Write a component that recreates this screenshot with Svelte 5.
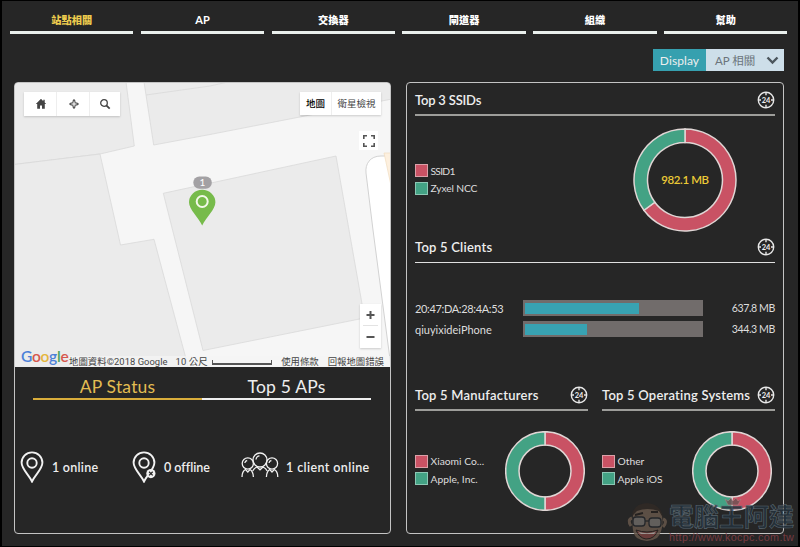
<script lang="ts">
	const tabs = ['站點相關', 'AP', '交換器', '閘道器', '組織', '幫助'];

	const red = '#c95264';
	const green = '#43a284';

	const clients = [
		{ name: '20:47:DA:28:4A:53', usage: '637.8 MB', percent: 65 },
		{ name: 'qiuyixideiPhone', usage: '344.3 MB', percent: 35.5 }
	];

	const halves = [
		{
			title: 'Top 5 Manufacturers',
			legend: ['Xiaomi Co...', 'Apple, Inc.']
		},
		{
			title: 'Top 5 Operating Systems',
			legend: ['Other', 'Apple iOS']
		}
	];

	// ring segment between two fractions of a full turn, clockwise from 12 o'clock
	function arc(c: number, outer: number, inner: number, from: number, to: number) {
		const point = (r: number, t: number) => {
			const a = t * Math.PI * 2;
			return `${(c + r * Math.sin(a)).toFixed(2)} ${(c - r * Math.cos(a)).toFixed(2)}`;
		};
		const large = to - from > 0.5 ? 1 : 0;
		return `M${point(outer, from)}A${outer} ${outer} 0 ${large} 1 ${point(outer, to)}L${point(inner, to)}A${inner} ${inner} 0 ${large} 0 ${point(inner, from)}Z`;
	}
</script>

{#snippet clock()}
	<svg class="clock" width="18" height="18" viewBox="0 0 18 18">
		<circle cx="9" cy="9" r="7.7" />
		<path d="M9 1v3.2M9 13.8V17M1 9h3M14 9H17" />
		<text x="9" y="11.5" text-anchor="middle">24</text>
	</svg>
{/snippet}

{#snippet donut(size: number, outer: number, inner: number, split: number)}
	<svg class="donut" width={size} height={size} viewBox="0 0 {size} {size}">
		<path d={arc(size / 2, outer, inner, 0, split)} fill={red} />
		<path d={arc(size / 2, outer, inner, split, 1)} fill={green} />
	</svg>
{/snippet}

{#snippet legend(items: string[])}
	<ul class="legend">
		{#each items as item, i}
			<li><i class:second={i === 1}></i><span>{item}</span></li>
		{/each}
	</ul>
{/snippet}

<div class="page">
	<nav>
		{#each tabs as tab, i}
			<div class="tab" class:active={i === 0} class:latin={tab === 'AP'}>{tab}</div>
		{/each}
	</nav>

	<div class="toolbar">
		<span class="label">Display</span>
		<div class="select">
			<span>AP 相關</span>
			<svg width="13" height="9" viewBox="0 0 13 9">
				<path d="M1.5 1.5l5 5 5-5" fill="none" stroke="#4b555c" stroke-width="2.4" />
			</svg>
		</div>
	</div>

	<main>
		<section class="panel left">
			<div class="map">
				<svg class="tiles" width="375" height="284" viewBox="15 83 375 284">
					<g fill="#ebebeb" stroke="#d9d9d9" stroke-width="0.8">
						<path d="M14 82H126L134.3 146 100 154 14 164.5Z" />
						<path d="M14 164.5L100 154 120.5 245 154 239.3 185 355 188.5 368H14Z" />
						<path d="M144 82L153.7 145 210 134.5 310 115 392 99V82Z" />
						<path d="M146 95L210 86 228 82" fill="none" />
						<path d="M163.3 193.3L336 156 364.5 318 203 350.5Z" />
					</g>
					<path
						d="M392 156H381C370 156 365 164 366 173L373 230 391 367H392Z"
						fill="#fff"
						stroke="#d2d2d2"
					/>
					<path d="M384 153H392V190Z" fill="#fdf0df" stroke="#f1dcc0" stroke-width="0.7" />
					<rect x="193.3" y="176.5" width="18.5" height="12.3" rx="6" fill="#a3a1a4" />
					<text class="count" x="202.3" y="186.3" text-anchor="middle">1</text>
					<path
						d="M202.2 225.5C198.5 217.5 189 209.5 189 202.3A13.2 12.6 0 0 1 215.4 202.3C215.4 209.500 206 217.500 202.2 225.5Z"
						fill="#77bb4b"
					/>
					<circle cx="202.2" cy="201.5" r="5.5" fill="none" stroke="#f3f8e9" stroke-width="2" />
				</svg>

				<div class="tools">
					<span>
						<svg width="12" height="12" viewBox="0 0 12 12">
							<path d="M6 .8L.8 6H2.2V10.7H5V7.500H7V10.7H9.8V6H11.2L9.7 4.5V1.700H8.3V3.2Z" fill="#444" />
						</svg>
					</span>
					<span>
						<svg width="12" height="12" viewBox="0 0 12 12">
							<path d="M6 .8L8.2 3.800 11.2 6 8.2 8.200 6 11.2 3.8 8.200 .8 6 3.8 3.800Z" fill="#555" />
							<path d="M6 3.500V8.500M3.500 6H8.500" stroke="#fff" stroke-width="1.100" />
							<path d="M2.800 2.800L4.300 4.300M9.200 2.800L7.700 4.300M2.800 9.200L4.300 7.700M9.200 9.200L7.700 7.700" stroke="#fff" stroke-width="1.400" />
						</svg>
					</span>
					<span>
						<svg width="12" height="12" viewBox="0 0 12 12">
							<circle cx="5" cy="5" r="3.3" fill="none" stroke="#444" stroke-width="1.3" />
							<path d="M7.3 7.3L10.7 10.7" stroke="#444" stroke-width="1.8" />
						</svg>
					</span>
				</div>

				<div class="types">
					<span class="current">地圖</span>
					<span>衛星檢視</span>
				</div>

				<div class="fullscreen">
					<svg width="12" height="12" viewBox="0 0 12 12">
						<path d="M.8 4V.8H4M8 .8H11.2V4M11.2 8V11.2H8M4 11.2H.8V8" fill="none" stroke="#555" stroke-width="1.6" />
					</svg>
				</div>

				<div class="zoom">
					<svg width="21" height="44" viewBox="0 0 21 44">
						<path d="M6.500 11H14.500M10.500 7V15M6.500 33H14.500" stroke="#555" stroke-width="2" />
						<path d="M3 21.500H18" stroke="#e3e3e3" />
					</svg>
				</div>

				<div class="google">
					<b>G</b><b>o</b><b>o</b><b>g</b><b>l</b><b>e</b>
				</div>
				<div class="credits">
					<span class="data">地圖資料©2018 Google</span>
					<span class="scale">10 公尺</span>
					<i></i>
					<span class="terms">使用條款</span>
					<span class="report">回報地圖錯誤</span>
				</div>
			</div>

			<div class="switch">
				<span class="active">AP Status</span>
				<span>Top 5 APs</span>
			</div>

			<div class="status">
				<div class="stat online">
					<svg width="24" height="32" viewBox="0 0 24 32">
						<path d="M12 30.500C9 24 1.6 18 1.6 11.8A10.4 10.400 0 0 1 22.4 11.8C22.4 18 15 24 12 30.500Z" />
						<circle cx="12" cy="12" r="4.7" />
					</svg>
					<span>1 online</span>
				</div>
				<div class="stat offline">
					<svg width="24" height="32" viewBox="0 0 24 32">
						<path d="M12 30.500C9 24 1.6 18 1.6 11.8A10.4 10.400 0 0 1 22.4 11.8C22.4 18 15 24 12 30.500Z" />
						<circle cx="12" cy="12" r="4.7" />
						<circle cx="18.9" cy="22.6" r="4.6" fill="#f2f2f2" stroke="none" />
						<path d="M17.100 20.800L20.700 24.400M20.700 20.800L17.100 24.400" class="cross" />
					</svg>
					<span>0 offline</span>
				</div>
				<div class="stat people">
					<svg width="38" height="28" viewBox="0 0 38 28">
						<circle cx="19" cy="9" r="7" />
						<circle cx="6.8" cy="12.5" r="5.6" />
						<circle cx="31" cy="12.5" r="5.6" />
						<path d="M15 8.5Q15.5 5 18.5 4.8M3.8 12Q4.2 9.8 6.2 9.5M28 12Q28.4 9.8 30.4 9.5" />
						<path d="M1 26Q1 20.5 4.5 18.500L6.8 21 9 18.500Q12.2 20.5 12.4 26M25.4 26Q25.6 20.5 28.8 18.500L31 21 33.3 18.500Q36.8 20.5 36.8 26" />
						<path d="M11.7 20Q13 17.3 16 16L19 18.800 22 16Q25 17.3 26.2 20" />
					</svg>
					<span>1 client online</span>
				</div>
			</div>
		</section>

		<section class="panel right">
			<header>
				<h3 class="ssids">Top 3 SSIDs</h3>
				{@render clock()}
			</header>
			<div class="usage">
				{@render legend(['SSID1', 'Zyxel NCC'])}
				<div class="ring">
					{@render donut(104, 51, 37.5, 0.649)}
					<span>982.1 MB</span>
				</div>
			</div>

			<header class="thin">
				<h3>Top 5 Clients</h3>
				{@render clock()}
			</header>
			<div class="clients">
				{#each clients as client}
					<div class="client">
						<span class="name">{client.name}</span>
						<div class="bar"><div class="fill" style="width: {client.percent}%"></div></div>
						<span class="amount">{client.usage}</span>
					</div>
				{/each}
			</div>

			<div class="halves">
				{#each halves as half}
					<div class="half">
						<header>
							<h3>{half.title}</h3>
							{@render clock()}
						</header>
						<div class="share">
							{@render legend(half.legend)}
							{@render donut(80, 39.3, 26, 0.5)}
						</div>
					</div>
				{/each}
			</div>
		</section>
	</main>

	<div class="watermark">
		<svg width="42" height="46" viewBox="0 0 42 46">
			<path d="M6 14Q4 33 10 37 20 43 30 37 37 30 35 14 31 5 20 5 9 6 6 14Z" fill="#66574b" />
			<path d="M5 15Q6 3 20 2 34 3 36 17L32 10Q20 6 10 10Z" fill="#312a25" />
			<path d="M5 17Q0 19 4 25M36 18Q41 20 36 26" fill="none" stroke="#66574b" stroke-width="3" />
			<path d="M8 14L16 12M24 11L31 11" stroke="#25211f" stroke-width="2" />
			<g fill="#6d6966" stroke="#24272b" stroke-width="1.3">
				<rect x="6" y="16" width="12" height="9" rx="3" />
				<rect x="22" y="17" width="12" height="9" rx="3" />
				<path d="M18 20H22" />
			</g>
			<path d="M9 29Q20 33 31 29 28 38 19 38 12 37 9 29Z" fill="#75413e" stroke="#25211f" />
			<path d="M11 30.500Q20 34 29 30.500L27 33H14Z" fill="#97918b" />
		</svg>
		<svg class="crown" width="18" height="9" viewBox="0 0 18 9">
			<path d="M1 2L4 4 7 1 9 4 12 1 14 4 17 2 14 8H4Z" fill="#705154" stroke="#b78388" stroke-width="0.6" />
		</svg>
		<div>
			<strong>電腦王阿達</strong>
			<small>http://www.kocpc.com.tw</small>
		</div>
	</div>
</div>

<style>
	:global(body) {
		margin: 0;
		background: #000;
	}

	.page {
		box-sizing: border-box;
		position: relative;
		width: 800px;
		height: 547px;
		overflow: hidden;
		border: solid #000;
		border-width: 1px 2px 1px 2px;
		background: #262626;
		color: #eee;
		font-family: Lato, 'Noto Sans CJK TC', sans-serif;
		font-size: 11px;
		font-variant-ligatures: none;
		white-space: nowrap;
	}

	nav {
		display: grid;
		grid-template-columns: repeat(6, 1fr);
		gap: 7.4px;
		padding: 8px 10.5px 0 8px;
	}

	.tab {
		height: 22px;
		border-bottom: 3px solid #e9efec;
		text-align: center;
		line-height: 22px;
		font-size: 10.2px;
		font-weight: 900;
		color: #fff;
	}

	.tab.latin {
		font-size: 11px;
		font-weight: 700;
	}

	.tab.active {
		color: #eccb4e;
	}

	.toolbar {
		display: flex;
		justify-content: flex-end;
		height: 22px;
		padding: 15px 14.5px 0 0;
		line-height: 23px;
	}

	.label {
		width: 53px;
		height: 22px;
		background: #36a0af;
		text-align: center;
		font-size: 12px;
		letter-spacing: 0.1px;
	}

	.select {
		box-sizing: border-box;
		display: flex;
		align-items: center;
		justify-content: space-between;
		width: 77.5px;
		height: 22px;
		padding: 0 5px 0 9px;
		background: #cddee9;
		color: #6b747b;
		font-size: 11.5px;
	}

	main {
		display: flex;
		gap: 15px;
		padding: 11px 14px 0 12px;
	}

	.panel {
		box-sizing: border-box;
		height: 452px;
		border: 1px solid #c4c4c4;
		border-radius: 4px;
	}

	.left {
		width: 377px;
		overflow: hidden;
	}

	.map {
		position: relative;
		height: 284px;
		overflow: hidden;
		background: #f6f6f6;
		color: #444;
	}

	.tiles {
		display: block;
	}

	.count {
		fill: #fff;
		font-size: 10px;
	}

	.tools,
	.types,
	.fullscreen,
	.zoom {
		position: absolute;
		display: flex;
		align-items: center;
		background: #fff;
		box-shadow: 0 1px 2px rgba(0, 0, 0, 0.18);
	}

	.tools {
		top: 9px;
		left: 9px;
		align-items: stretch;
		width: 96px;
		height: 24px;
	}

	.tools span {
		display: flex;
		flex: 1;
		align-items: center;
		justify-content: center;
		border-right: 1px solid #eee;
		padding-left: 2px;
	}

	.tools span:last-child {
		border: 0;
		padding: 0;
	}

	.types {
		top: 9px;
		left: 285px;
		width: 81px;
		height: 23px;
		font-size: 9.5px;
	}

	.types span {
		flex: 1;
		text-align: center;
		line-height: 23px;
	}

	.types .current {
		flex: 0 0 31px;
		border-right: 1px solid #eee;
		color: #000;
		font-weight: 500;
	}

	.fullscreen {
		top: 48px;
		left: 344px;
		width: 19px;
		height: 19px;
		justify-content: center;
		box-shadow: none;
	}

	.zoom {
		top: 221px;
		left: 345px;
		width: 21px;
		height: 44px;
	}

	.google {
		position: absolute;
		bottom: 1px;
		left: 6px;
		display: flex;
		font-size: 15.5px;
		letter-spacing: -0.3px;
		line-height: 20px;
	}

	.google b {
		font-weight: 600;
		color: #4c80d8;
	}

	.google b:nth-child(2),
	.google b:nth-child(6) {
		color: #d6574d;
	}

	.google b:nth-child(3) {
		color: #e5b63c;
	}

	.google b:nth-child(5) {
		color: #4da35e;
	}

	.credits {
		position: absolute;
		right: 0;
		bottom: 0;
		display: flex;
		box-sizing: border-box;
		width: 321px;
		height: 11px;
		padding-right: 6px;
		background: rgba(245, 245, 245, 0.7);
		font-family: Roboto, 'Noto Sans CJK TC', sans-serif;
		font-size: 9.4px;
		line-height: 11px;
	}

	.data {
		letter-spacing: 0.04px;
	}

	.scale {
		margin-left: 8px;
		letter-spacing: 0.1px;
	}

	.credits i {
		width: 58px;
		height: 3px;
		margin: 4px 0 0 4px;
		border: solid #555;
		border-width: 0 1px 2px;
	}

	.terms {
		margin-left: auto;
	}

	.report {
		margin-left: 9px;
	}

	.switch {
		display: flex;
		margin: 3px 19px 0 18px;
	}

	.switch span {
		flex: 1;
		height: 28px;
		border-bottom: 2px solid #eee;
		text-align: center;
		line-height: 34px;
		font-size: 17.5px;
		font-weight: 400;
		letter-spacing: 0.2px;
	}

	.switch .active {
		border-color: #d9ad3b;
		color: #e3bd52;
	}

	.status {
		display: flex;
		height: 134px;
		align-items: center;
		padding-left: 5px;
	}

	.stat {
		display: flex;
		align-items: center;
		gap: 8px;
		font-size: 12.5px;
		font-weight: 600;
		letter-spacing: 0.25px;
	}

	.stat.online {
		width: 112px;
	}

	.stat.offline {
		width: 109px;
		letter-spacing: 0;
	}

	.stat.people {
		gap: 7px;
		letter-spacing: 0.4px;
	}

	.stat svg {
		flex: none;
		fill: none;
		stroke: #f2f2f2;
		stroke-width: 1.9;
	}

	.stat.people svg {
		margin-top: -4px;
		stroke-width: 1.3;
	}

	.stat .cross {
		stroke: #262626;
		stroke-width: 1.3;
	}

	.right {
		width: 378px;
		padding: 0 8px;
	}

	header {
		box-sizing: border-box;
		display: flex;
		align-items: center;
		justify-content: space-between;
		height: 33px;
		border-bottom: 2px solid #9d9d9a;
	}

	header.thin {
		height: 32px;
		border-bottom: 1px solid #e0e0e0;
	}

	h3 {
		margin: 3px 0 0;
		font-size: 13px;
		font-weight: 600;
		line-height: 18px;
		letter-spacing: 0.22px;
	}

	h3.ssids {
		letter-spacing: -0.2px;
	}

	.thin h3 {
		margin-top: 1px;
	}

	.clock {
		margin-top: 2px;
		flex: none;
		fill: none;
		stroke: #e8e8e8;
		stroke-width: 1.4;
	}

	.thin .clock {
		margin-top: 1px;
	}

	.clock text {
		fill: #eee;
		stroke: none;
		font-size: 7.5px;
		font-weight: 700;
	}

	.usage,
	.share {
		box-sizing: border-box;
		display: flex;
		align-items: center;
		justify-content: space-between;
	}

	.usage {
		height: 115px;
		padding-right: 38px;
	}

	.share {
		height: 120px;
		padding-right: 3px;
	}

	.share .legend {
		margin-top: -2px;
	}

	.legend {
		display: flex;
		flex-direction: column;
		gap: 4.5px;
		margin: 0;
		padding: 0;
		list-style: none;
	}

	.usage .legend {
		margin-top: 12px;
	}

	.legend li {
		display: flex;
		align-items: center;
		gap: 3px;
		height: 13px;
		font-size: 10.3px;
		color: #ddd;
	}

	.usage li {
		letter-spacing: -0.15px;
	}

	.usage li:first-child {
		letter-spacing: -0.75px;
	}

	.legend i {
		box-sizing: border-box;
		width: 12.5px;
		height: 13px;
		border: 1px solid #dba0a8;
		background: #c95264;
	}

	.legend i.second {
		border-color: #8cc7b4;
		background: #43a284;
	}

	.ring {
		display: grid;
		place-items: center;
		margin-top: 12px;
	}

	.ring > span,
	.ring > :global(svg) {
		grid-area: 1 / 1;
	}

	.ring > span {
		color: #eccb36;
		font-size: 11.5px;
		font-weight: 600;
		letter-spacing: -0.4px;
	}

	.donut {
		display: block;
		stroke: #e0d6d5;
		stroke-width: 1.5;
	}

	.clients {
		display: flex;
		flex-direction: column;
		box-sizing: border-box;
		gap: 5px;
		height: 115px;
		padding-top: 37px;
	}

	.client {
		display: flex;
		align-items: center;
		height: 16px;
		font-size: 11px;
		color: #ddd;
	}

	.name {
		width: 108px;
	}

	.client:first-child .name {
		letter-spacing: -0.35px;
	}

	.bar {
		box-sizing: border-box;
		width: 180px;
		height: 16px;
		padding: 2.5px 2px;
		background: #716c6b;
	}

	.fill {
		height: 11px;
		background: #38a2b2;
	}

	.amount {
		margin-left: auto;
		font-size: 10.6px;
		letter-spacing: -0.4px;
	}

	.halves {
		display: grid;
		grid-template-columns: 1fr 1fr;
		gap: 14px;
	}

	.watermark {
		position: absolute;
		top: 500px;
		left: 625px;
		display: flex;
		opacity: 0.85;
	}

	.watermark > div {
		display: flex;
		flex-direction: column;
	}

	.watermark strong {
		color: #24313c;
		font-size: 25px;
		font-weight: 700;
		line-height: 31px;
		-webkit-text-stroke: 0.6px #62717b;
	}

	.watermark small {
		color: #843f47;
		font-family: 'Liberation Sans', sans-serif;
		font-size: 10.8px;
		letter-spacing: 0.3px;
		line-height: 11px;
	}

	.crown {
		position: absolute;
		top: -4px;
		left: 97px;
	}
</style>
